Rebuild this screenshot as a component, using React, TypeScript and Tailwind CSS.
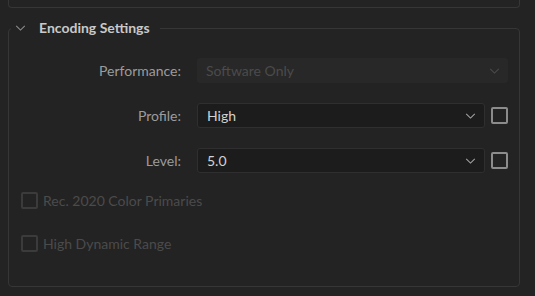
import React from "react";

const Chevron = ({ className }: { className?: string }) => (
  <svg viewBox="0 0 12 7" className={className} fill="none">
    <path d="M1 1l5 5 5-5" stroke="currentColor" strokeWidth="1.2" />
  </svg>
);

const Select = ({
  value,
  disabled,
  className,
}: {
  value: string;
  disabled?: boolean;
  className?: string;
}) => (
  <div
    className={
      "flex h-[25px] items-center justify-between rounded-[3px] pl-[9px] pr-[8px] " +
      (disabled
        ? "bg-[#282828] text-[#4b4b4b]"
        : "border border-[#2f2f2f] bg-[#1c1c1c] pl-[8px] text-[#d2d2d2]") +
      " " +
      (className ?? "")
    }
  >
    <span className="text-[14px] leading-none">{value}</span>
    <Chevron className={"h-[6px] w-[11px] " + (disabled ? "text-[#4b4b4b]" : "text-[#a3a3a3]")} />
  </div>
);

const Box = ({ disabled }: { disabled?: boolean }) => (
  <div
    className={
      "h-[17px] w-[17px] shrink-0 rounded-[2px] border-2 " +
      (disabled ? "border-[#3b3b3b]" : "border-[#8c8c8c]")
    }
  />
);

export default function App() {
  return (
    <div
      className="h-[296px] w-[535px] overflow-hidden bg-[#232323]"
      style={{ fontFamily: "Lato, 'Open Sans', sans-serif" }}
    >
      <div className="ml-2 h-2 w-[512px] rounded-b-[4px] border-x border-b border-[#363636]" />

      <fieldset className="mx-2 mt-[12px] h-[267px] w-[512px] rounded-[4px] border border-[#363636] px-0">
        <legend className="ml-[2px] flex h-4 items-center pl-[4px] pr-[10px]">
          <Chevron className="mr-[13px] h-[6px] w-[11px] text-[#8e8e8e]" />
          <span className="text-[14px] font-bold leading-none text-[#c9c9c9]">
            Encoding Settings
          </span>
        </legend>

        <div className="mt-[22px] grid grid-cols-[172px_1fr] items-center gap-x-4 gap-y-5 pr-[11px]">
          <span className="text-right text-[14px] text-[#9c9c9c]">Performance:</span>
          <Select value="Software Only" disabled />

          <span className="text-right text-[14px] text-[#9c9c9c]">Profile:</span>
          <div className="flex items-center gap-[6px]">
            <Select value="High" className="flex-1" />
            <Box />
          </div>

          <span className="text-right text-[14px] text-[#9c9c9c]">Level:</span>
          <div className="flex items-center gap-[6px]">
            <Select value="5.0" className="flex-1" />
            <Box />
          </div>
        </div>

        <div className="mt-[17px] flex flex-col gap-[22px] pl-3">
          <div className="flex items-center gap-[5px]">
            <Box disabled />
            <span className="text-[14px] text-[#4b4b4b]">Rec. 2020 Color Primaries</span>
          </div>
          <div className="flex items-center gap-[5px]">
            <Box disabled />
            <span className="text-[14px] text-[#4b4b4b]">High Dynamic Range</span>
          </div>
        </div>
      </fieldset>
    </div>
  );
}
